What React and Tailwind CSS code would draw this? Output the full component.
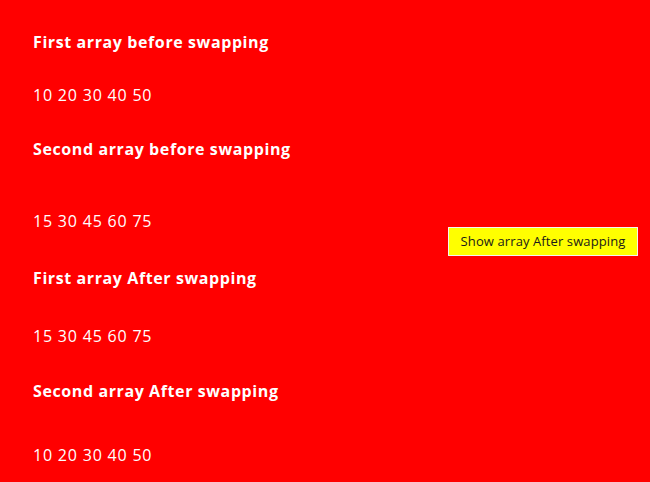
export default function App() {
  const rows = [
    { label: 'First array before swapping', values: '10 20 30 40 50', gapLabel: 'mt-[30px]', gapValues: 'mt-[29px]' },
    { label: 'Second array before swapping', values: '15 30 45 60 75', gapLabel: 'mt-[30px]', gapValues: 'mt-[48px]' },
    { label: 'First array After swapping', values: '15 30 45 60 75', gapLabel: 'mt-[33px]', gapValues: 'mt-[34px]' },
    { label: 'Second array After swapping', values: '10 20 30 40 50', gapLabel: 'mt-[31px]', gapValues: 'mt-[40px]' },
  ];

  return (
    <div className="flex h-screen w-full bg-[#ff0000] text-white font-['Open_Sans',sans-serif] overflow-hidden">
      <div className="flex-1 pl-[33px]">
        {rows.map((row, i) => (
          <div key={i}>
            <div className={`${row.gapLabel} text-[16px] font-bold leading-[24px] tracking-[0.6px]`}>
              {row.label}
            </div>
            <div className={`${row.gapValues} text-[16px] leading-[24px] tracking-[0.8px]`}>
              {row.values}
            </div>
          </div>
        ))}
      </div>
      <div className="flex items-center pr-[12px]">
        <button className="w-[190px] h-[29px] bg-[#ffff00] border border-[#f4f4f4] text-[13px] tracking-[0.1px] text-[#1a1a1a] leading-none">
          Show array After swapping
        </button>
      </div>
    </div>
  );
}
